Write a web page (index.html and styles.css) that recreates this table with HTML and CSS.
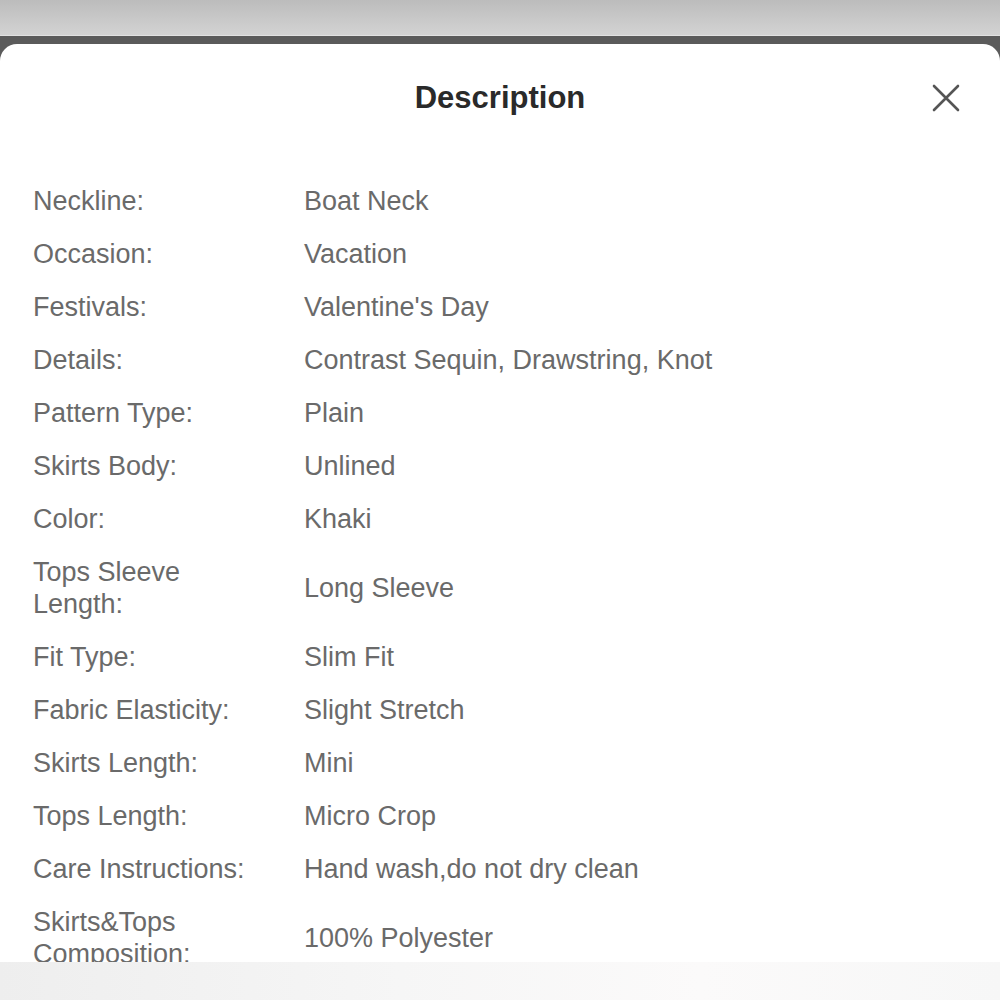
FILE: index.html
```html
<!DOCTYPE html>
<html lang="en">

<head>
    <meta charset="UTF-8">
    <meta name="viewport" content="width=device-width, initial-scale=1.0">
    <title>Description</title>
    <link rel="stylesheet" href="styles.css">
</head>

<body>
    <div class="top-strip"></div>
    <div class="backdrop">
        <div class="sheet">
            <div class="sheet-header">
                <h1>Description</h1>
                <button class="close" aria-label="Close">
                    <svg width="28" height="28" viewBox="0 0 28 28">
                        <path d="M2 2 L26 26 M26 2 L2 26" stroke="#555" stroke-width="2.6" stroke-linecap="round" fill="none" />
                    </svg>
                </button>
            </div>
            <div class="attr-list">
                <div class="attr"><div class="attr-name">Neckline:</div><div class="attr-value">Boat Neck</div></div>
                <div class="attr"><div class="attr-name">Occasion:</div><div class="attr-value">Vacation</div></div>
                <div class="attr"><div class="attr-name">Festivals:</div><div class="attr-value">Valentine's Day</div></div>
                <div class="attr"><div class="attr-name">Details:</div><div class="attr-value">Contrast Sequin, Drawstring, Knot</div></div>
                <div class="attr"><div class="attr-name">Pattern Type:</div><div class="attr-value">Plain</div></div>
                <div class="attr"><div class="attr-name">Skirts Body:</div><div class="attr-value">Unlined</div></div>
                <div class="attr"><div class="attr-name">Color:</div><div class="attr-value">Khaki</div></div>
                <div class="attr"><div class="attr-name">Tops Sleeve Length:</div><div class="attr-value">Long Sleeve</div></div>
                <div class="attr"><div class="attr-name">Fit Type:</div><div class="attr-value">Slim Fit</div></div>
                <div class="attr"><div class="attr-name">Fabric Elasticity:</div><div class="attr-value">Slight Stretch</div></div>
                <div class="attr"><div class="attr-name">Skirts Length:</div><div class="attr-value">Mini</div></div>
                <div class="attr"><div class="attr-name">Tops Length:</div><div class="attr-value">Micro Crop</div></div>
                <div class="attr"><div class="attr-name">Care Instructions:</div><div class="attr-value">Hand wash,do not dry clean</div></div>
                <div class="attr"><div class="attr-name">Skirts&amp;Tops Composition:</div><div class="attr-value">100% Polyester</div></div>
            </div>
        </div>
    </div>
    <div class="bottom-strip"></div>
</body>

</html>
```

FILE: styles.css
```css
body {
    font-family: "Liberation Sans", Arial, sans-serif;
    margin: 0;
    padding: 0;
    background-color: #5b5b5b;
    overflow: hidden;
}

.top-strip {
    height: 35px;
    background: linear-gradient(#bcbcbc, #d3d3d3);
    border-bottom: 1px solid #e2e2e2;
}

.backdrop {
    background-color: #5b5b5b;
    padding-top: 8px;
}

.sheet {
    background-color: #ffffff;
    border-radius: 17px 17px 0 0;
    height: 918px;
    overflow: hidden;
}

.sheet-header {
    position: relative;
    height: 130px;
    text-align: center;
}

.sheet-header h1 {
    margin: 0;
    padding-top: 36px;
    font-size: 31px;
    font-weight: bold;
    color: #2a2a2a;
    line-height: 36px;
}

.close {
    position: absolute;
    top: 40px;
    right: 40px;
    width: 28px;
    height: 28px;
    padding: 0;
    border: none;
    background: none;
}

.attr-list {
    padding: 0 33px;
}

.attr {
    display: flex;
    align-items: center;
    padding: 10.5px 0;
    font-size: 27px;
    line-height: 32px;
    color: #6a6a6a;
}

.attr-name {
    width: 226px;
    flex-shrink: 0;
    margin-right: 45px;
}

.attr-value {
    flex: 1;
}

.bottom-strip {
    height: 38px;
    background: linear-gradient(90deg, #eeeeee, #f6f6f6 40%, #fbfafa 70%, #f7f7f7);
}
```
